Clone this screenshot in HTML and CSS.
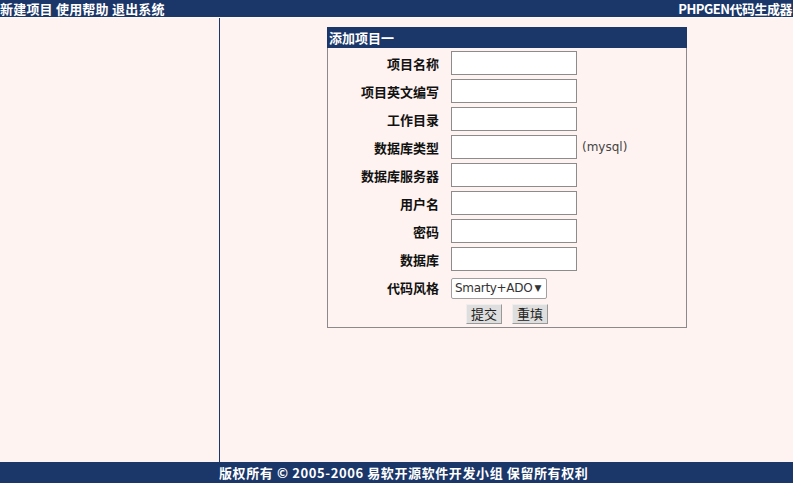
FILE: index.html
```html
<!DOCTYPE html>
<html>
<head>
<meta charset="utf-8">
<link rel="stylesheet" href="styles.css">
</head>
<body>
<div class="top">
  <div class="menu"><span>新建项目</span> <span>使用帮助</span> <span>退出系统</span></div>
  <div class="brand">PHPGEN代码生成器</div>
</div>
<div class="main">
  <div class="side"></div>
  <div class="content">
    <div class="box">
      <div class="box-title">添加项目一</div>
      <div class="rows">
        <div class="row"><label>项目名称</label><span class="input"></span></div>
        <div class="row"><label>项目英文编写</label><span class="input"></span></div>
        <div class="row"><label>工作目录</label><span class="input"></span></div>
        <div class="row"><label>数据库类型</label><span class="input"></span><span class="hint">(mysql)</span></div>
        <div class="row"><label>数据库服务器</label><span class="input"></span></div>
        <div class="row"><label>用户名</label><span class="input"></span></div>
        <div class="row"><label>密码</label><span class="input"></span></div>
        <div class="row"><label>数据库</label><span class="input"></span></div>
        <div class="row"><label>代码风格</label><span class="select"><span class="sel-text">Smarty+ADO</span><span class="arrow">▼</span></span></div>
        <div class="row buttons"><span class="btn">提交</span><span class="btn">重填</span></div>
      </div>
    </div>
  </div>
</div>
<div class="footer">版权所有 © 2005-2006 易软开源软件开发小组 保留所有权利</div>
</body>
</html>
```
FILE: styles.css
```css
html, body {
  margin: 0;
  padding: 0;
}
body {
  background: #fef3f0;
  font-family: "Noto Sans CJK SC", "DejaVu Sans", sans-serif;
  font-size: 13px;
  width: 793px;
  height: 483px;
  overflow: hidden;
}
.top {
  height: 17px;
  background: #1b3668;
  color: #fff;
  font-weight: bold;
  line-height: 17px;
  display: flex;
  justify-content: space-between;
  border-bottom: 1px solid #fffaf8;
}
.menu { letter-spacing: 0.2px; }
.menu span { white-space: nowrap; }
.brand { padding-right: 1px; letter-spacing: -0.5px; }
.main {
  display: flex;
  height: 444px;
}
.side {
  width: 219px;
  border-right: 1px solid #1b3668;
  flex: none;
}
.content {
  flex: 1;
  padding-top: 9px;
}
.box {
  width: 358px;
  margin: 0 0 0 107px;
  border: 1px solid #8a8a8a;
  border-top: none;
}
.box-title {
  height: 21px;
  line-height: 21px;
  background: #1b3668;
  color: #fff;
  font-weight: bold;
  padding-left: 2px;
  margin: 0 -1px;
}
.rows {
  padding-top: 1px;
}
.row {
  display: flex;
  align-items: center;
  height: 28px;
}
.row label {
  width: 111px;
  text-align: right;
  font-weight: bold;
  color: #111;
  margin-right: 12px;
  flex: none;
}
.input {
  width: 124px;
  height: 22px;
  background: #fff;
  border: 1px solid #8c8c8c;
  flex: none;
}
.hint {
  margin-left: 5px;
  color: #444;
  font-size: 12px;
  font-family: "DejaVu Sans", sans-serif;
}
.select {
  width: 91px;
  height: 19px;
  background: #fff;
  border: 1px solid #a0a0a0;
  border-radius: 2px;
  display: flex;
  align-items: center;
  justify-content: space-between;
  padding: 0 0 0 3px;
  box-sizing: content-box;
  font-family: "DejaVu Sans", sans-serif;
  font-size: 12px;
  letter-spacing: -0.3px;
  color: #333;
  margin-top: 2px;
}
.sel-text { white-space: nowrap; }
.arrow {
  font-size: 9px;
  padding-right: 5px;
}
.row.buttons {
  height: 26px;
  padding-left: 138px;
  gap: 10px;
}
.btn {
  width: 34px;
  height: 18px;
  line-height: 18px;
  text-align: center;
  background: #dedede;
  border: 1px solid #eee;
  border-right-color: #999;
  border-bottom-color: #999;
  color: #222;
}
.footer {
  height: 21px;
  line-height: 21px;
  background: #1b3668;
  color: #fff;
  font-weight: bold;
  padding-left: 219px;
  letter-spacing: 0.6px;
  white-space: nowrap;
}
```
